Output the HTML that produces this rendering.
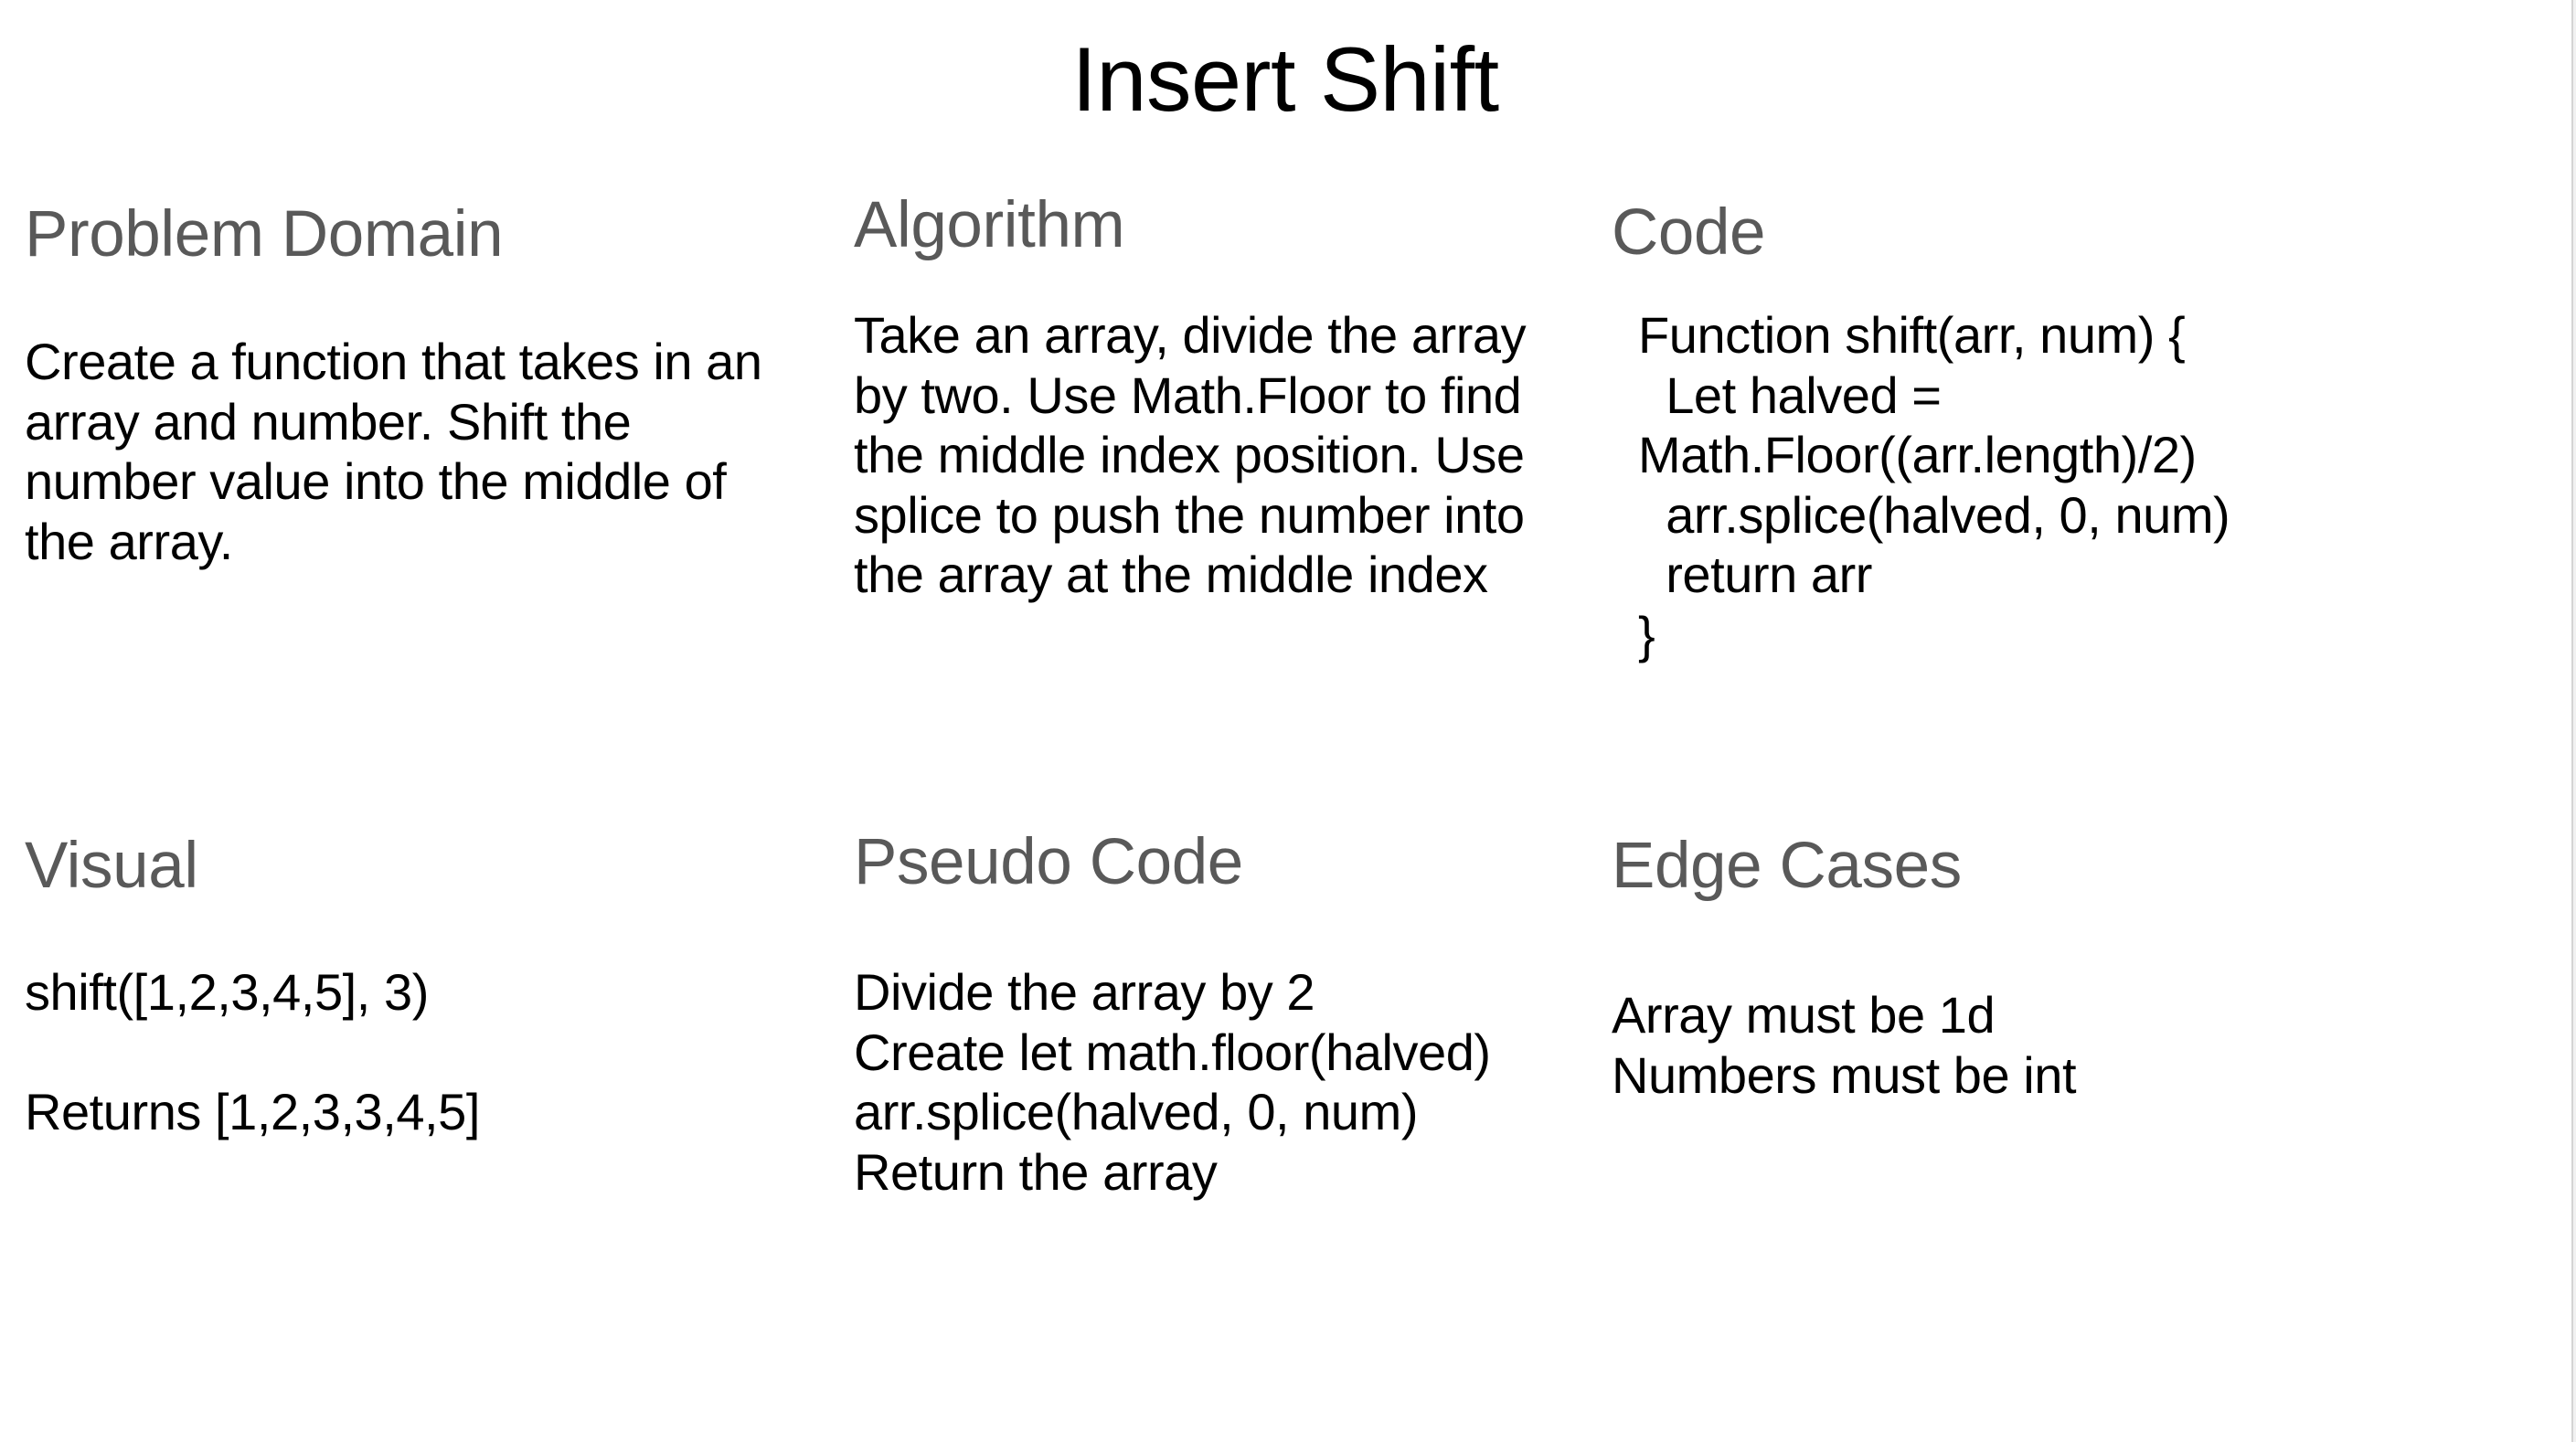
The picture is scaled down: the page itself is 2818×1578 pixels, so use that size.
<!DOCTYPE html>
<html><head><meta charset="utf-8"><style>
html,body{margin:0;padding:0;background:#fff;}
body{width:2818px;height:1578px;position:relative;overflow:hidden;font-family:"Liberation Sans",Arial,sans-serif;}
.t{position:absolute;white-space:pre;}
.title{font-size:99px;line-height:120px;color:#000;top:27px;left:0;width:2812px;text-align:center;letter-spacing:-0.5px;}
.h{font-size:71px;line-height:86px;color:#595959;letter-spacing:-0.4px;}
.b{font-size:56px;line-height:65.6px;color:#000;letter-spacing:-0.45px;}
.edge{position:absolute;left:2813px;top:0;width:2px;height:1578px;background:#d4d4d4;}
.edge2{position:absolute;left:2815px;top:0;width:3px;height:1578px;background:#f1f1f1;}
</style></head><body>
<div class="t title">Insert Shift</div>

<div class="t h" style="left:27px;top:214px">Problem Domain</div>
<div class="t b" style="left:27px;top:363px">Create a function that takes in an
array and number. Shift the
number value into the middle of
the array.</div>

<div class="t h" style="left:934px;top:204px">Algorithm</div>
<div class="t b" style="left:934px;top:334px">Take an array, divide the array
by two. Use Math.Floor to find
the middle index position. Use
splice to push the number into
the array at the middle index</div>

<div class="t h" style="left:1763px;top:212px">Code</div>
<div class="t b" style="left:1792px;top:334px">Function shift(arr, num) {
  Let halved =
Math.Floor((arr.length)/2)
  arr.splice(halved, 0, num)
  return arr
}</div>

<div class="t h" style="left:27px;top:905px">Visual</div>
<div class="t b" style="left:27px;top:1053px">shift([1,2,3,4,5], 3)

Returns [1,2,3,3,4,5]</div>

<div class="t h" style="left:934px;top:901px">Pseudo Code</div>
<div class="t b" style="left:934px;top:1053px">Divide the array by 2
Create let math.floor(halved)
arr.splice(halved, 0, num)
Return the array</div>

<div class="t h" style="left:1763px;top:905px">Edge Cases</div>
<div class="t b" style="left:1763px;top:1078px">Array must be 1d
Numbers must be int</div>

<div class="edge"></div><div class="edge2"></div>
</body></html>
